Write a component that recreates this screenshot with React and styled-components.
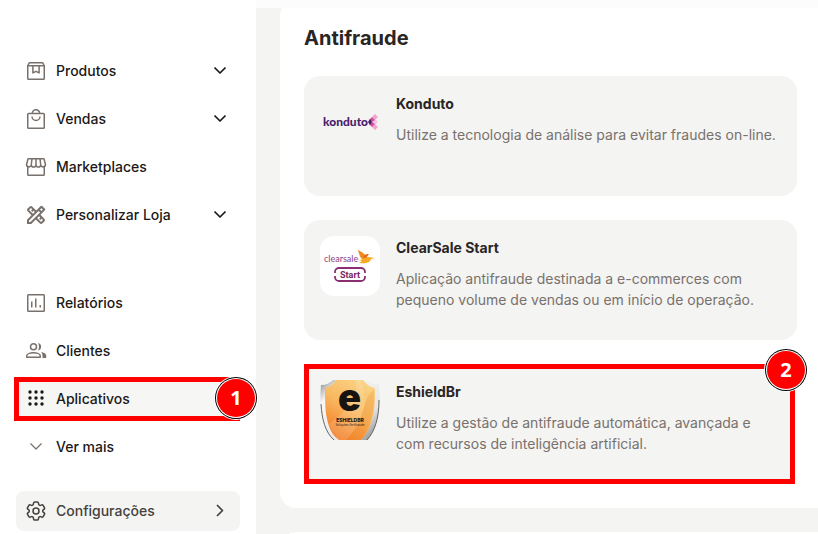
import styled, { createGlobalStyle } from "styled-components";
import { HiOutlineCog6Tooth } from "react-icons/hi2";
import { MdOutlineDesignServices } from "react-icons/md";

const mainLinks = [
    { label: "Produtos", icon: <BoxIcon />, expandable: true },
    { label: "Vendas", icon: <BagIcon />, expandable: true },
    { label: "Marketplaces", icon: <StoreIcon /> },
    { label: "Personalizar Loja", icon: <MdOutlineDesignServices size={24} />, expandable: true }
];

const apps = [
    {
        name: "Konduto",
        logo: <KondutoLogo />,
        text: "Utilize a tecnologia de análise para evitar fraudes on-line."
    },
    {
        name: "ClearSale Start",
        logo: <ClearSaleLogo />,
        text: "Aplicação antifraude destinada a e-commerces com pequeno volume de vendas ou em início de operação."
    },
    {
        name: "EshieldBr",
        logo: <EshieldLogo />,
        text: "Utilize a gestão de antifraude automática, avançada e com recursos de inteligência artificial.",
        step: 2
    }
];

const App = () => {
    return (
        <Page>
            <GlobalStyle />
            <Sidebar>
                <NavGroup>
                    {mainLinks.map((link) =>
                        link.expandable ?
                            <NavButton key={link.label} type="button" aria-expanded="false">
                                <IconSlot>{link.icon}</IconSlot>
                                <Label>{link.label}</Label>
                                <IconSlot $color="#1c1917"><Chevron /></IconSlot>
                            </NavButton>
                            :
                            <NavLink key={link.label} href="#">
                                <IconSlot>{link.icon}</IconSlot>
                                <Label>{link.label}</Label>
                            </NavLink>
                    )}
                </NavGroup>

                <NavGroup>
                    <NavLink href="#">
                        <IconSlot><ReportIcon /></IconSlot>
                        <Label>Relatórios</Label>
                    </NavLink>
                    <NavLink href="#">
                        <IconSlot><PeopleIcon /></IconSlot>
                        <Label>Clientes</Label>
                    </NavLink>
                    <MarkedLink href="#" aria-current="page">
                        <IconSlot $color="#1c1917"><DotsIcon /></IconSlot>
                        <Label>Aplicativos</Label>
                        <NavStep>1</NavStep>
                    </MarkedLink>
                    <NavButton type="button" aria-expanded="false">
                        <IconSlot><Chevron thin /></IconSlot>
                        <Label>Ver mais</Label>
                    </NavButton>
                </NavGroup>

                <SettingsLink href="#">
                    <IconSlot $color="#44403c"><HiOutlineCog6Tooth size={24} /></IconSlot>
                    <Label>Configurações</Label>
                    <IconSlot $color="#44403c"><Chevron right /></IconSlot>
                </SettingsLink>
            </Sidebar>

            <Main>
                <TopFade />
                <Panel>
                    <Heading>Antifraude</Heading>
                    {apps.map((app) => {
                        const Wrapper = app.step ? MarkedCard : Card;
                        return (
                            <Wrapper key={app.name}>
                                {app.logo}
                                <CardText>
                                    <CardTitle>{app.name}</CardTitle>
                                    <Description>{app.text}</Description>
                                </CardText>
                                {app.step && <CardStep>{app.step}</CardStep>}
                            </Wrapper>
                        );
                    })}
                </Panel>
                <Panel />
            </Main>
        </Page>
    );
};

export default App;

function LineIcon({ children, width = 1.5 }) {
    return (
        <svg width="24" height="24" viewBox="0 0 24 24" fill="none" stroke="currentColor" strokeWidth={width} strokeLinejoin="round" aria-hidden="true">
            {children}
        </svg>
    );
}

function BoxIcon() {
    return (
        <LineIcon>
            <path d="M3.75 6.75 5.25 3.75h13.5l1.5 3v12.75a.75.75 0 0 1-.75.75h-15a.75.75 0 0 1-.75-.75z" />
            <path d="M3.75 6.75h16.5M8.9 6.75v7.2L12 12.3l3.1 1.65v-7.2" />
        </LineIcon>
    );
}

function BagIcon() {
    return (
        <LineIcon>
            <rect x="3.75" y="6.5" width="16.5" height="14.75" rx="0.75" />
            <path d="M8.25 6.5a3.75 3.75 0 0 1 7.5 0M8 9.5a4 4 0 0 0 8 0" />
        </LineIcon>
    );
}

function StoreIcon() {
    return (
        <LineIcon>
            <path d="M4.1 3.75h15.8l1.5 5.5a2.3 2.3 0 0 1-4.7.5 2.35 2.35 0 0 1-4.7 0 2.35 2.35 0 0 1-4.7 0 2.3 2.3 0 0 1-4.7-.5z" />
            <path d="M8 3.75 7.3 9.5M12 3.75V9.5M16 3.75l.7 5.75M3.75 11.5v8c0 .4.35.75.75.75h15c.4 0 .75-.35.75-.75v-8" />
        </LineIcon>
    );
}

function ReportIcon() {
    return (
        <LineIcon>
            <rect x="3.75" y="3.75" width="16.5" height="16.5" rx="0.75" />
            <path d="M7.75 10.5v6M11.75 7.5v9M16.25 14v2.5" />
        </LineIcon>
    );
}

function PeopleIcon() {
    return (
        <LineIcon>
            <circle cx="9.5" cy="7.75" r="3" />
            <path d="M2.75 18.25v-1.5c0-1.8 3.3-3 6.75-3s6.75 1.2 6.75 3v1.5z" />
            <path d="M14 4.1a3.7 3.7 0 0 1 0 7.3c1.4-2 1.4-5.3 0-7.3zM17 13c3 .5 5.200 1.700 5.200 3.700V19h-3.700v-2.300c0-1.500-.4-2.700-1.500-3.700z" fill="currentColor" stroke="none" />
        </LineIcon>
    );
}

function DotsIcon() {
    return (
        <svg width="24" height="24" viewBox="0 0 24 24" fill="currentColor" aria-hidden="true">
            {[5, 11, 17].map((y) => [6, 12, 18].map((x) =>
                <circle key={`${x}-${y}`} cx={x} cy={y} r="1.7" />
            ))}
        </svg>
    );
}

function Chevron({ right, thin }) {
    return (
        <LineIcon width={thin ? 1.3 : 1.7}>
            <path d={right ? "m9 6 5.5 5.5L9 17" : "m6.5 8.5 5.5 5.5 5.5-5.5"} />
        </LineIcon>
    );
}

function KondutoLogo() {
    return (
        <Logo viewBox="0 0 60 60" role="img" aria-label="Konduto">
            <text x="3" y="34" fontFamily="Lato, sans-serif" fontSize="12" fontWeight="900" fill="#4a1d6b">konduto</text>
            <path d="m55 22 3 3-3 3-3-3zM55 32l3 3-3 3-3-3z" fill="#f3a3cf" />
            <path d="m55 27 3 3-3 3-3-3z" fill="#f7c4df" />
            <path d="m52 25 3 3-3 2-3-2zM52 30l3 2-3 3-3-3z" fill="#d04fa0" />
            <path d="m50 27 2 3-2 3-2-3z" fill="#4a1d6b" />
        </Logo>
    );
}

function ClearSaleLogo() {
    return (
        <Logo viewBox="0 0 60 60" role="img" aria-label="ClearSale Start">
            <rect width="60" height="60" rx="14" fill="#fff" />
            <text x="4" y="26" fontFamily="Lato, sans-serif" fontSize="9" fill="#8b3f7f">clearsale</text>
            <path d="M38 14c4 2 8 4 9 9l-4 1c-3-2-4-6-5-10z" fill="#f08a1d" />
            <path d="M39 24c4 0 6-3 9-3l7 1-4 1c-1 4-6 5-12 4l3-2z" fill="#f7a823" />
            <path d="M43 21c1-2 3-3 6-3l-3 4z" fill="#e8641b" />
            <path d="M15 37v-1a4 4 0 0 1 4-4h22a4 4 0 0 1 4 4v1M15 40v1a4 4 0 0 0 4 4h22a4 4 0 0 0 4-4v-1" fill="none" stroke="#8b2f72" strokeWidth="1.8" />
            <text x="30" y="42" textAnchor="middle" fontFamily="Roboto, sans-serif" fontSize="9" fontWeight="700" fill="#7b2364">Start</text>
        </Logo>
    );
}

function EshieldLogo() {
    return (
        <Logo viewBox="0 0 60 60" role="img" aria-label="EshieldBr">
            <defs>
                <linearGradient id="shieldFill" x1="0.8" y1="0" x2="0.3" y2="1">
                    <stop offset="0" stopColor="#fbd487" />
                    <stop offset="0.5" stopColor="#f8b860" />
                    <stop offset="1" stopColor="#f27a22" />
                </linearGradient>
                <linearGradient id="shieldRim" x1="0" y1="0" x2="1" y2="1">
                    <stop offset="0" stopColor="#888" />
                    <stop offset="0.2" stopColor="#f8f8f8" />
                    <stop offset="0.7" stopColor="#e6e6e6" />
                    <stop offset="1" stopColor="#777" />
                </linearGradient>
            </defs>
            <path d="M13 0h33c3 3 8 5 13 4 1 13 1 25-2 36-2 8-5 15-10 20H14C8 55 4 48 3 40 0 29 0 17 1 5c5 0 9-2 12-5z" fill="url(#shieldRim)" />
            <path d="M1 24c1 15 4 28 13 36M59 20c0 18-4 31-12 40" fill="none" stroke="#666" strokeWidth="1" />
            <path d="M16 0h27c3 4 7 7 12 8 0 12 0 23-3 31-2 9-6 16-11 21H19C12 55 9 48 7 39 5 30 5 18 5 8c5-1 9-4 11-8z" fill="url(#shieldFill)" />
            <path d="M35 0c5 13-4 28-26 44 2 6 5 12 9 16h8C44 42 49 20 41 0z" fill="#fff" opacity="0.15" />
            <path d="M54 10C42 18 48 32 28 60h10c12-10 17-28 16-50z" fill="#ed862d" opacity="0.25" />
            <text x="29.5" y="31" textAnchor="middle" fontFamily="Inter, sans-serif" fontSize="38" fontWeight="900" fill="#161310">e</text>
            <text x="30" y="42" textAnchor="middle" fontFamily="Inter, sans-serif" fontSize="5" fontWeight="800" fill="#201813">ESHIELDBR</text>
            <text x="30" y="46" textAnchor="middle" fontFamily="Inter, sans-serif" fontSize="3" fontWeight="500" fill="#4a2b17">Soluções Antifraude</text>
        </Logo>
    );
}

const GlobalStyle = createGlobalStyle`
    * {
        box-sizing: border-box;
    }

    body {
        margin: 0;
        font-family: Inter, sans-serif;
        font-size: 14px;
        color: #1c1917;
        background: #fff;
    }
`;

const Page = styled.div`
    display: flex;
    height: 100vh;
    overflow: hidden;
`;

const Sidebar = styled.nav`
    position: relative;
    z-index: 1;
    flex: 0 0 256px;
    display: flex;
    flex-direction: column;
    padding: 51px 16px 0;
    background: #fff;
`;

const NavGroup = styled.div`
    display: flex;
    flex-direction: column;
    gap: 8px;

    & + & {
        margin-top: 48px;
    }
`;

const NavLink = styled.a`
    display: flex;
    align-items: center;
    gap: 8px;
    height: 40px;
    padding: 0 8px;
    border: 0;
    background: none;
    color: #1c1917;
    font: 500 14px/20px Inter, sans-serif;
    text-align: left;
    text-decoration: none;
    cursor: pointer;
`;

const NavButton = styled(NavLink).attrs({ as: "button" })``;

const MarkedLink = styled(NavLink)`
    position: relative;
    height: 44px;
    margin: -2px 0 -2px -2px;
    padding: 0 5px;
    border: 5px solid #f00;
    background: #f6f6f5;
`;

const SettingsLink = styled(NavLink)`
    margin-top: 24px;
    border-radius: 8px;
    background: #f4f4f3;
    color: #44403c;
`;

const IconSlot = styled.span`
    display: flex;
    flex: 0 0 24px;
    color: ${(props) => props.$color || "#78716c"};
`;

const Label = styled.span`
    flex: 1;
`;

const Step = styled.span`
    position: absolute;
    display: flex;
    align-items: center;
    justify-content: center;
    width: 38px;
    height: 38px;
    border-radius: 50%;
    background: #f00;
    box-shadow: 0 0 0 1px #fff, 0 0 0 2px #000, 0 0 0 3px #fff;
    color: #fff;
    font: 700 20px/24px "Open Sans", sans-serif;
`;

const NavStep = styled(Step)`
    top: -3px;
    right: -20px;
`;

const CardStep = styled(Step)`
    top: -18px;
    right: -15px;
`;

const Main = styled.main`
    position: relative;
    flex: 1;
    display: flex;
    flex-direction: column;
    gap: 24px;
    min-width: 0;
    padding-left: 24px;
    background: #f4f4f3;
`;

const TopFade = styled.div`
    position: absolute;
    top: 0;
    left: 0;
    right: 0;
    height: 8px;
    background: #fcfcfc;
`;

const Panel = styled.section`
    flex: none;
    display: flex;
    flex-direction: column;
    gap: 24px;
    padding: 24px 21px 24px 24px;
    border-radius: 16px 0 0 16px;
    background: #fff;
`;

const Heading = styled.h2`
    margin: 0;
    color: #292524;
    font-size: 20px;
    font-weight: 700;
    line-height: 28px;
`;

const Card = styled.article`
    display: flex;
    gap: 16px;
    min-height: 120px;
    padding: 16px;
    border-radius: 16px;
    background: #f4f4f3;
`;

const MarkedCard = styled(Card)`
    position: relative;
    margin-right: 2px;
    padding: 11px;
    border: 5px solid #f00;
    border-radius: 0;
`;

const Logo = styled.svg`
    flex: none;
    width: 60px;
    height: 60px;
    overflow: visible;
`;

const CardText = styled.div`
    flex: 1;
`;

const CardTitle = styled.h3`
    margin: 0 0 8px;
    color: #292524;
    font-size: 14px;
    font-weight: 700;
    line-height: 24px;
`;

const Description = styled.p`
    margin: 0;
    color: #78716c;
    font-size: 14px;
    line-height: 21px;
`;
